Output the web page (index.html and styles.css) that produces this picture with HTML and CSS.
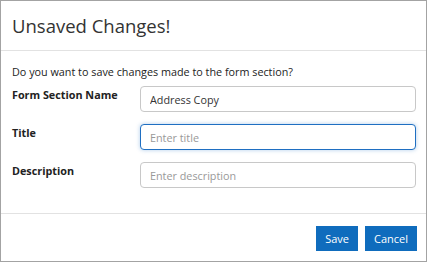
FILE: index.html
```html
<!DOCTYPE html>
<html lang="en">
<head>
    <meta charset="UTF-8">
    <title>Unsaved Changes</title>
    <link rel="stylesheet" href="styles.css">
</head>
<body>
    <div class="dialog">
        <div class="dialog-header">
            <h4>Unsaved Changes!</h4>
        </div>
        <div class="dialog-body">
            <p>Do you want to save changes made to the form section?</p>
            <div class="form-row">
                <label for="sectionName">Form Section Name</label>
                <input id="sectionName" type="text" value="Address Copy">
            </div>
            <div class="form-row">
                <label for="title">Title</label>
                <input id="title" class="focused" type="text" placeholder="Enter title">
            </div>
            <div class="form-row">
                <label for="description">Description</label>
                <input id="description" type="text" placeholder="Enter description">
            </div>
        </div>
        <div class="dialog-footer">
            <button class="btn">Save</button>
            <button class="btn">Cancel</button>
        </div>
    </div>
</body>
</html>
```

FILE: styles.css
```css
body {
    margin: 0;
    font-family: "Open Sans", sans-serif;
    color: #333;
    background-color: #ffffff;
}

.dialog {
    width: 427px;
    height: 262px;
    box-sizing: border-box;
    border: 1px solid #a3a3a3;
    display: flex;
    flex-direction: column;
}

.dialog-header {
    height: 49px;
    border-bottom: 1px solid #e2e2e2;
    padding: 0 11px;
    display: flex;
    align-items: center;
}

.dialog-header h4 {
    margin: 0;
    font-size: 18.5px;
    font-weight: 400;
    color: #333;
}

.dialog-body {
    height: 163px;
    box-sizing: border-box;
    padding: 13px 10px 0 11px;
    border-bottom: 1px solid #e2e2e2;
}

.dialog-body p {
    margin: 0 0 7px;
    font-size: 10.8px;
    color: #222;
}

.form-row {
    display: grid;
    grid-template-columns: 128px 1fr;
    align-items: start;
    margin-bottom: 12px;
}

.form-row label {
    font-size: 10.8px;
    font-weight: 700;
    color: #222;
    padding-top: 1px;
}

.form-row input {
    height: 26px;
    box-sizing: border-box;
    border: 1px solid #c8c8c8;
    border-radius: 4px;
    padding: 0 9px;
    font-family: "Open Sans", sans-serif;
    font-size: 10.8px;
    color: #333;
    outline: none;
}

.form-row input::placeholder {
    color: #999;
}

.form-row input.focused {
    border-color: #1f6fc2;
    box-shadow: 0 0 4px rgba(31, 111, 194, 0.35);
}

.dialog-footer {
    flex: 1;
    display: flex;
    justify-content: flex-end;
    align-items: flex-start;
    gap: 7px;
    padding: 12px 9px 0 0;
}

.btn {
    background-color: #0f6cbd;
    color: #ffffff;
    border: none;
    height: 25px;
    padding: 0 9px;
    font-family: "Open Sans", sans-serif;
    font-size: 11px;
}
```
